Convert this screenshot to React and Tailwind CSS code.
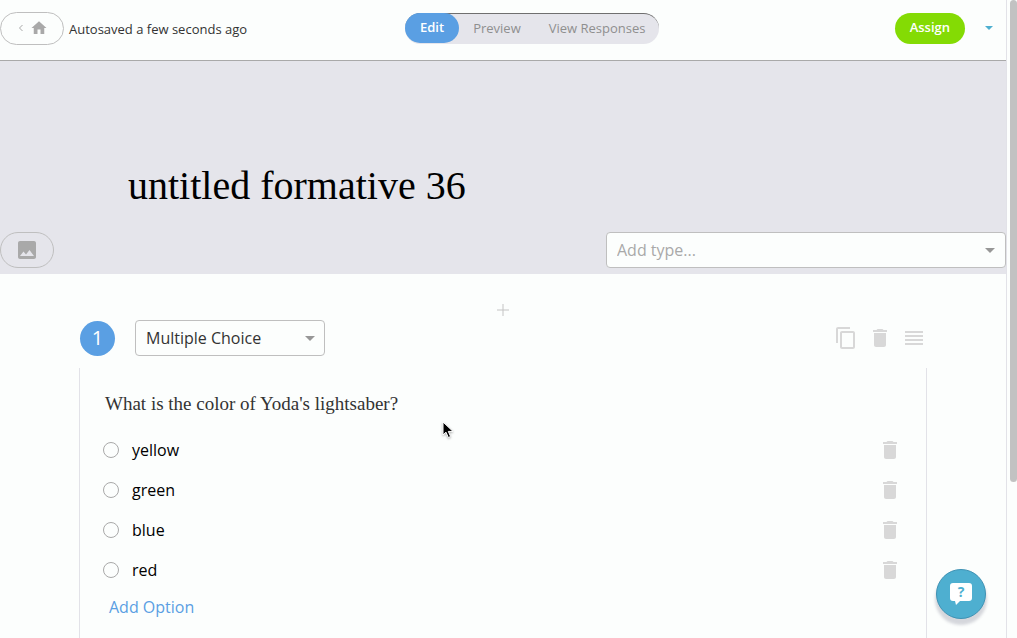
import { MdContentCopy, MdDelete, MdHome, MdImage, MdReorder } from "react-icons/md";

const TABS = ["Preview", "View Responses"];

const OPTIONS = ["yellow", "green", "blue", "red"];

function Caret({ className }) {
  return (
    <svg viewBox="0 0 10 5" className={className} aria-hidden="true">
      <path d="M0 0h10L5 5z" fill="currentColor" />
    </svg>
  );
}

function Header() {
  return (
    <header className="flex h-[61px] items-center border-b border-[#a9a9a9] pb-1">
      <div className="flex w-[405px] items-end gap-[5px]">
        <button
          aria-label="Home"
          className="flex h-[33px] w-16 items-center justify-center gap-1.5 rounded-full border border-[#bfbfbf] pl-0.5 text-[#a9a9a9]"
        >
          <svg viewBox="0 0 6 8" className="h-2 w-1.5" fill="none" stroke="currentColor" aria-hidden="true">
            <path d="M4.5 1 1.5 4l3 3" />
          </svg>
          <MdHome className="size-[18px]" />
        </button>
        <span className="text-[13px] leading-8 text-[#333]">Autosaved a few seconds ago</span>
      </div>

      <nav className="flex h-[31px] items-center rounded-full border-t border-[#6f6f6f] bg-[#e5e5eb] text-[13px] font-medium text-[#8f8f8f]">
        <button className="-mt-0.5 h-[30px] rounded-full bg-[#5a9fe3] px-[15px] font-semibold text-white">Edit</button>
        {TABS.map((tab) => (
          <button key={tab} className="h-full px-3.5">
            {tab}
          </button>
        ))}
      </nav>

      <div className="ml-auto flex items-center gap-5 pr-[13px]">
        <button className="h-[31px] rounded-full bg-[#84db04] px-[15px] text-[13px] font-semibold text-white">
          Assign
        </button>
        <button aria-label="Assign options" className="text-[#4eafd0]">
          <Caret className="h-1 w-2" />
        </button>
      </div>
    </header>
  );
}

function Banner() {
  return (
    <section className="bg-[#e5e5eb] pt-[101px] pb-1.5">
      <h1 className="pl-32 font-['Liberation_Serif',serif] text-[40px] leading-[48px] text-black">
        untitled formative 36
      </h1>
      <div className="mt-[22px] flex items-center justify-between">
        <button
          aria-label="Add header image"
          className="flex h-9 w-[54px] items-center justify-center rounded-full border border-[#bfbfbf] text-[#a9a9a9]"
        >
          <MdImage className="size-6" />
        </button>
        <div className="relative w-[400px]">
          <select
            aria-label="Add type"
            className="h-9 w-full appearance-none rounded border border-[#bfbfbf] bg-[#fcfefd] px-2.5 text-base text-[#a9a9a9]"
          >
            <option>Add type...</option>
          </select>
          <Caret className="pointer-events-none absolute top-4 right-[11px] h-[5px] w-2.5 text-[#979797]" />
        </div>
      </div>
    </section>
  );
}

function QuestionBar() {
  return (
    <div className="flex items-center px-px">
      <span className="grid size-[35px] place-items-center rounded-full bg-[#5a9fe3] text-xl font-medium text-white">
        1
      </span>
      <div className="relative ml-5 w-[190px]">
        <select
          aria-label="Question type"
          className="h-9 w-full appearance-none rounded border border-[#bfbfbf] bg-[#fcfefd] px-2.5 text-base text-[#333]"
        >
          <option>Multiple Choice</option>
        </select>
        <Caret className="pointer-events-none absolute top-4 right-2.5 h-[5px] w-2.5 text-[#979797]" />
      </div>
      <div className="ml-auto flex gap-2.5 text-[#d8d8d8]">
        <button aria-label="Duplicate question">
          <MdContentCopy className="size-6" />
        </button>
        <button aria-label="Delete question">
          <MdDelete className="size-6" />
        </button>
        <button aria-label="Reorder question">
          <MdReorder className="size-6" />
        </button>
      </div>
    </div>
  );
}

function Option({ label }) {
  return (
    <li className="flex h-10 items-center justify-between">
      <label className="flex items-center gap-[13px] text-base text-black">
        <input
          type="radio"
          name="answer"
          className="size-4 appearance-none rounded-full border border-[#a9a9a9] bg-[#fcfefd] checked:border-4 checked:border-[#5a9fe3]"
        />
        {label}
      </label>
      <button aria-label={`Delete ${label}`} className="text-[#d8d8d8]">
        <MdDelete className="size-6" />
      </button>
    </li>
  );
}

function HelpButton() {
  return (
    <button
      aria-label="Help"
      className="absolute right-[31px] bottom-[19px] grid size-[50px] place-items-center rounded-full border border-[#3f92b4] bg-[#4eafd0] shadow-[0_5px_3px_1px_rgba(60,60,90,0.2)]"
    >
      <span className="relative flex h-[22px] w-[22px] justify-center">
        <svg viewBox="0 0 22 22" className="absolute inset-0" fill="#fff" aria-hidden="true">
          <path d="M3 0h16a3 3 0 0 1 3 3v12a3 3 0 0 1-3 3h-9l-4 4-1-4H3a3 3 0 0 1-3-3V3a3 3 0 0 1 3-3z" />
        </svg>
        <span className="relative text-sm leading-[18px] font-bold text-[#4eafd0]">?</span>
      </span>
    </button>
  );
}

function Pointer() {
  return (
    <svg
      viewBox="0 0 12 18"
      className="pointer-events-none absolute top-[421px] left-[442px] h-[18px] w-3 drop-shadow-[0_1px_1px_rgba(0,0,0,0.3)]"
      aria-hidden="true"
    >
      <path d="M1 1v13l3-2.8 2.3 5.3 2.3-1-2.3-5.1H11z" fill="#000" stroke="#fff" />
    </svg>
  );
}

export default function App() {
  return (
    <div className="relative flex h-screen overflow-hidden bg-[#fcfefd] font-['Open_Sans',sans-serif]">
      <div className="flex min-w-0 flex-1 flex-col">
        <Header />
        <Banner />
        <main className="mx-auto flex w-full max-w-[848px] flex-1 flex-col pt-[26px]">
          <button aria-label="Add question" className="mx-auto text-[#c4c4c4]">
            <svg viewBox="0 0 12 12" className="size-5 p-1" stroke="currentColor" aria-hidden="true">
              <path d="M6 0v12M0 6h12" />
            </svg>
          </button>
          <QuestionBar />
          <section className="mt-3 flex-1 border-x border-[#e2e2e8] pr-6 pl-[23px]">
            <h2 className="pt-6 pl-0.5 font-['Liberation_Serif',serif] text-[19px] leading-6 text-[#333]">
              What is the color of Yoda's lightsaber?
            </h2>
            <ul className="mt-3.5">
              {OPTIONS.map((label) => (
                <Option key={label} label={label} />
              ))}
            </ul>
            <button className="mt-[5px] ml-1.5 text-base text-[#5a9fe3]">Add Option</button>
          </section>
        </main>
      </div>

      <div className="w-[11px] shrink-0 border-l border-[#e2e2e8] pl-[3px]">
        <div className="h-[482px] rounded-full bg-[#c2c2c2]" />
      </div>

      <Pointer />
      <HelpButton />
    </div>
  );
}
